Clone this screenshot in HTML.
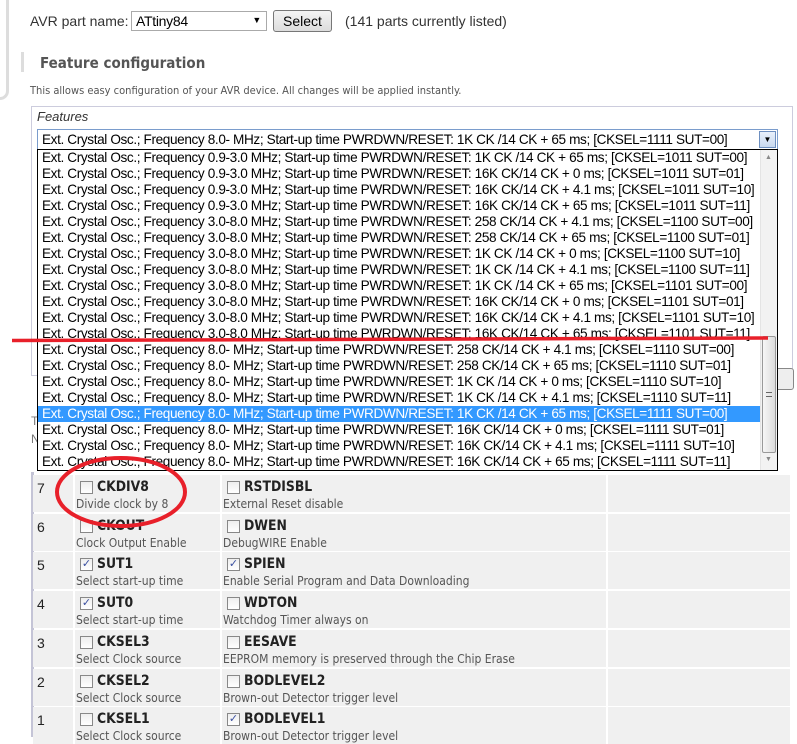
<!DOCTYPE html>
<html><head><style>
*{margin:0;padding:0;box-sizing:border-box}
body{width:797px;height:737px;overflow:hidden;background:#fff;position:relative;font-family:"Liberation Sans",Arial,sans-serif}
.a{position:absolute}
.opt{height:16px;line-height:16px;font-size:13.6px;letter-spacing:-0.38px;padding-left:4px;white-space:nowrap;color:#000}
.sel{background:#3399ff;color:#fff;width:723px}
.row{position:absolute;left:33px;width:757px;height:37px}
.c{position:absolute;top:0;height:37px;background:#f0f0f0}
.num{font:14px "Liberation Sans",sans-serif;color:#222;left:4px;top:5px;position:absolute}
.cb{position:absolute;left:5px;top:6px;width:13px;height:13px;border:1px solid #888;background:linear-gradient(#eee,#fff);font-size:11px;line-height:11px;color:#3a4fa0;text-align:center}
.lb{position:absolute;left:22px;top:4px;font:bold 13.8px "DejaVu Sans Condensed","DejaVu Sans",sans-serif;color:#222}
.ds{position:absolute;left:1px;top:22px;font:12px "DejaVu Sans Condensed","DejaVu Sans",sans-serif;color:#555;white-space:nowrap}
</style></head><body>
<div class="a" style="left:0;top:0;width:9px;height:100px;border-right:3px solid #ddd;border-bottom:3px solid #ddd;border-bottom-right-radius:9px"></div>
<div class="a" style="left:30px;top:13px;font-size:14px;color:#333">AVR part name:</div>
<div class="a" style="left:131px;top:11px;width:136px;height:20px;border:1px solid #aaa;font-size:14px;padding:1px 4px;letter-spacing:-0.3px">ATtiny84<span style="position:absolute;right:5px;top:3px;font-size:9px">▼</span></div>
<div class="a" style="left:273px;top:10px;width:59px;height:22px;border:1px solid #777;border-radius:3px;background:linear-gradient(#f4f4f4,#dcdcdc);font-size:14px;text-align:center;line-height:20px">Select</div>
<div class="a" style="left:345px;top:13px;font-size:14px;color:#333">(141 parts currently listed)</div>
<div class="a" style="left:21px;top:52px;width:3px;height:20px;background:#ddd"></div>
<div class="a" style="left:40px;top:54px;font:bold 15px 'DejaVu Sans Condensed','DejaVu Sans',sans-serif;color:#555">Feature configuration</div>
<div class="a" style="left:30px;top:84px;font:11px 'DejaVu Sans Condensed','DejaVu Sans',sans-serif;color:#555">This allows easy configuration of your AVR device. All changes will be applied instantly.</div>
<div class="a" style="left:31px;top:106px;width:762px;height:270px;border:1px solid #ccd"></div>
<div class="a" style="left:37px;top:109px;font:italic 13px 'Liberation Sans',sans-serif;color:#333">Features</div>
<div class="a" style="left:770px;top:368px;width:24px;height:22px;border:1px solid #888;border-radius:3px;background:#eee"></div>
<div class="a" style="left:31px;top:414px;font-size:12px;color:#777">T</div>
<div class="a" style="left:31px;top:432px;font-size:12px;color:#777">N</div>
<div class="a" style="left:37px;top:129px;width:741px;height:21px;border:1px solid #7a9ccc;background:#fff"><div class="opt" style="line-height:19px">Ext. Crystal Osc.; Frequency 8.0- MHz; Start-up time PWRDWN/RESET: 1K CK /14 CK + 65 ms; [CKSEL=1111 SUT=00]</div>
<div class="a" style="right:1px;top:1px;width:17px;height:17px;border:1px solid #6d8fc0;background:linear-gradient(#e8f0fb,#c8d8ee);font-size:8px;text-align:center;line-height:16px">▼</div></div>
<div class="a" style="left:31px;top:472px;width:3px;height:265px;background:#c4c4d6"></div>
<div class="a" style="left:34px;top:472px;width:757px;height:265px;background:#fff"></div>
<div id="rows"></div>
<div class="a" style="left:37px;top:149px;width:741px;height:322px;border:1px solid #000;background:#fff;padding-top:0">
<div class="opt">Ext. Crystal Osc.; Frequency 0.9-3.0 MHz; Start-up time PWRDWN/RESET: 1K CK /14 CK + 65 ms; [CKSEL=1011 SUT=00]</div>
<div class="opt">Ext. Crystal Osc.; Frequency 0.9-3.0 MHz; Start-up time PWRDWN/RESET: 16K CK/14 CK + 0 ms; [CKSEL=1011 SUT=01]</div>
<div class="opt">Ext. Crystal Osc.; Frequency 0.9-3.0 MHz; Start-up time PWRDWN/RESET: 16K CK/14 CK + 4.1 ms; [CKSEL=1011 SUT=10]</div>
<div class="opt">Ext. Crystal Osc.; Frequency 0.9-3.0 MHz; Start-up time PWRDWN/RESET: 16K CK/14 CK + 65 ms; [CKSEL=1011 SUT=11]</div>
<div class="opt">Ext. Crystal Osc.; Frequency 3.0-8.0 MHz; Start-up time PWRDWN/RESET: 258 CK/14 CK + 4.1 ms; [CKSEL=1100 SUT=00]</div>
<div class="opt">Ext. Crystal Osc.; Frequency 3.0-8.0 MHz; Start-up time PWRDWN/RESET: 258 CK/14 CK + 65 ms; [CKSEL=1100 SUT=01]</div>
<div class="opt">Ext. Crystal Osc.; Frequency 3.0-8.0 MHz; Start-up time PWRDWN/RESET: 1K CK /14 CK + 0 ms; [CKSEL=1100 SUT=10]</div>
<div class="opt">Ext. Crystal Osc.; Frequency 3.0-8.0 MHz; Start-up time PWRDWN/RESET: 1K CK /14 CK + 4.1 ms; [CKSEL=1100 SUT=11]</div>
<div class="opt">Ext. Crystal Osc.; Frequency 3.0-8.0 MHz; Start-up time PWRDWN/RESET: 1K CK /14 CK + 65 ms; [CKSEL=1101 SUT=00]</div>
<div class="opt">Ext. Crystal Osc.; Frequency 3.0-8.0 MHz; Start-up time PWRDWN/RESET: 16K CK/14 CK + 0 ms; [CKSEL=1101 SUT=01]</div>
<div class="opt">Ext. Crystal Osc.; Frequency 3.0-8.0 MHz; Start-up time PWRDWN/RESET: 16K CK/14 CK + 4.1 ms; [CKSEL=1101 SUT=10]</div>
<div class="opt">Ext. Crystal Osc.; Frequency 3.0-8.0 MHz; Start-up time PWRDWN/RESET: 16K CK/14 CK + 65 ms; [CKSEL=1101 SUT=11]</div>
<div class="opt">Ext. Crystal Osc.; Frequency 8.0- MHz; Start-up time PWRDWN/RESET: 258 CK/14 CK + 4.1 ms; [CKSEL=1110 SUT=00]</div>
<div class="opt">Ext. Crystal Osc.; Frequency 8.0- MHz; Start-up time PWRDWN/RESET: 258 CK/14 CK + 65 ms; [CKSEL=1110 SUT=01]</div>
<div class="opt">Ext. Crystal Osc.; Frequency 8.0- MHz; Start-up time PWRDWN/RESET: 1K CK /14 CK + 0 ms; [CKSEL=1110 SUT=10]</div>
<div class="opt">Ext. Crystal Osc.; Frequency 8.0- MHz; Start-up time PWRDWN/RESET: 1K CK /14 CK + 4.1 ms; [CKSEL=1110 SUT=11]</div>
<div class="opt sel">Ext. Crystal Osc.; Frequency 8.0- MHz; Start-up time PWRDWN/RESET: 1K CK /14 CK + 65 ms; [CKSEL=1111 SUT=00]</div>
<div class="opt">Ext. Crystal Osc.; Frequency 8.0- MHz; Start-up time PWRDWN/RESET: 16K CK/14 CK + 0 ms; [CKSEL=1111 SUT=01]</div>
<div class="opt">Ext. Crystal Osc.; Frequency 8.0- MHz; Start-up time PWRDWN/RESET: 16K CK/14 CK + 4.1 ms; [CKSEL=1111 SUT=10]</div>
<div class="opt">Ext. Crystal Osc.; Frequency 8.0- MHz; Start-up time PWRDWN/RESET: 16K CK/14 CK + 65 ms; [CKSEL=1111 SUT=11]</div>
<div class="a" style="right:0;top:0;width:17px;height:320px;background:#f2f2f2;border-left:1px solid #e4e4e4">
<div class="a" style="left:4px;top:4px;font-size:7px;color:#888">▲</div>
<div class="a" style="left:1px;top:186px;width:14px;height:117px;border:1px solid #999;border-radius:2px;background:linear-gradient(90deg,#f6f6f6,#dcdcdc)"><div style="position:absolute;left:3px;top:55px;width:6px;height:5px;border-top:1px solid #666;border-bottom:1px solid #666"></div></div>
<div class="a" style="left:4px;top:306px;font-size:7px;color:#888">▼</div>
</div>
</div>
<svg class="a" style="left:0;top:0" width="797" height="737">
<line x1="12" y1="340.5" x2="768" y2="338" stroke="#e8202a" stroke-width="3.5"/>
<ellipse cx="121" cy="492" rx="64" ry="34" fill="none" stroke="#e8202a" stroke-width="4"/>
</svg>
<script>
var d=[["7","CKDIV8",0,"Divide clock by 8","RSTDISBL",0,"External Reset disable"],["6","CKOUT",0,"Clock Output Enable","DWEN",0,"DebugWIRE Enable"],["5","SUT1",1,"Select start-up time","SPIEN",1,"Enable Serial Program and Data Downloading"],["4","SUT0",1,"Select start-up time","WDTON",0,"Watchdog Timer always on"],["3","CKSEL3",0,"Select Clock source","EESAVE",0,"EEPROM memory is preserved through the Chip Erase"],["2","CKSEL2",0,"Select Clock source","BODLEVEL2",0,"Brown-out Detector trigger level"],["1","CKSEL1",0,"Select Clock source","BODLEVEL1",1,"Brown-out Detector trigger level"]];
var h="";
d.forEach(function(r,i){var t=475+i*38.7;
h+='<div class="row" style="top:'+t+'px"><div class="c" style="left:0;width:40px"><span class="num">'+r[0]+'</span></div>'+
'<div class="c" style="left:42px;width:145px"><div class="cb">'+(r[2]?'✓':'')+'</div><div class="lb">'+r[1]+'</div><div class="ds">'+r[3]+'</div></div>'+
'<div class="c" style="left:189px;width:384px"><div class="cb">'+(r[5]?'✓':'')+'</div><div class="lb">'+r[4]+'</div><div class="ds">'+r[6]+'</div></div>'+
'<div class="c" style="left:575px;width:182px"></div></div>';});
document.getElementById("rows").innerHTML=h;
</script>
</body></html>
